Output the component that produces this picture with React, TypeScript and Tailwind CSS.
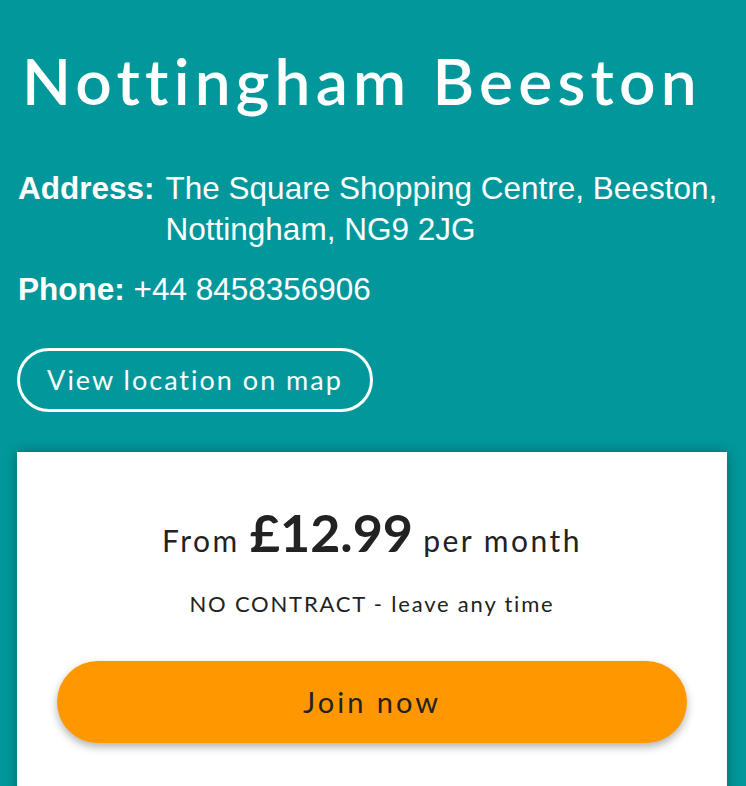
export default function App() {
  return (
    <div className="min-h-[786px] bg-[#02989b] px-[17px] pt-[42px] overflow-hidden">
      {/* Location header */}
      <h1 className="pl-[5px] text-[64px] leading-[77px] tracking-[5.2px] text-white font-semibold whitespace-nowrap [font-family:Lato,'Noto_Sans',sans-serif]">
        Nottingham Beeston
      </h1>

      <div className="mt-[49px] text-[31.5px] leading-[41px] text-white [font-family:'Liberation_Sans',Arial,sans-serif]">
        <div className="flex gap-[11px] pl-[1px]">
          <span className="font-bold shrink-0">Address:</span>
          <span>The Square Shopping Centre, Beeston, Nottingham, NG9 2JG</span>
        </div>
        <p className="mt-[19px] pl-[1px]">
          <span className="font-bold">Phone:</span> +44 8458356906
        </p>
      </div>

      <button className="mt-[38px] h-[64px] w-[356px] rounded-full border-[3px] border-white text-[27px] tracking-[2px] text-white [font-family:Lato,'Noto_Sans',sans-serif]">
        View location on map
      </button>

      {/* Membership card */}
      <div className="mt-[40px] w-[710px] bg-white pt-[52px] pb-[60px] shadow-[0_0_12px_rgba(0,0,0,0.3)] text-[#222] text-center [font-family:Lato,'Noto_Sans',sans-serif]">
        <p className="text-[30px] leading-[56px] tracking-[2.5px]">
          From <span className="text-[52px] font-bold tracking-[0px]">£12.99</span> per month
        </p>
        <p className="mt-[23px] text-[22px] leading-[26px] tracking-[1.8px]">NO CONTRACT - leave any time</p>
        <div className="px-[40px] mt-[44px]">
          <button className="w-full h-[82px] rounded-full bg-[#ff9800] text-[29px] tracking-[3px] text-[#222] shadow-[0_4px_8px_rgba(0,0,0,0.3)]">
            Join now
          </button>
        </div>
      </div>
    </div>
  );
}
